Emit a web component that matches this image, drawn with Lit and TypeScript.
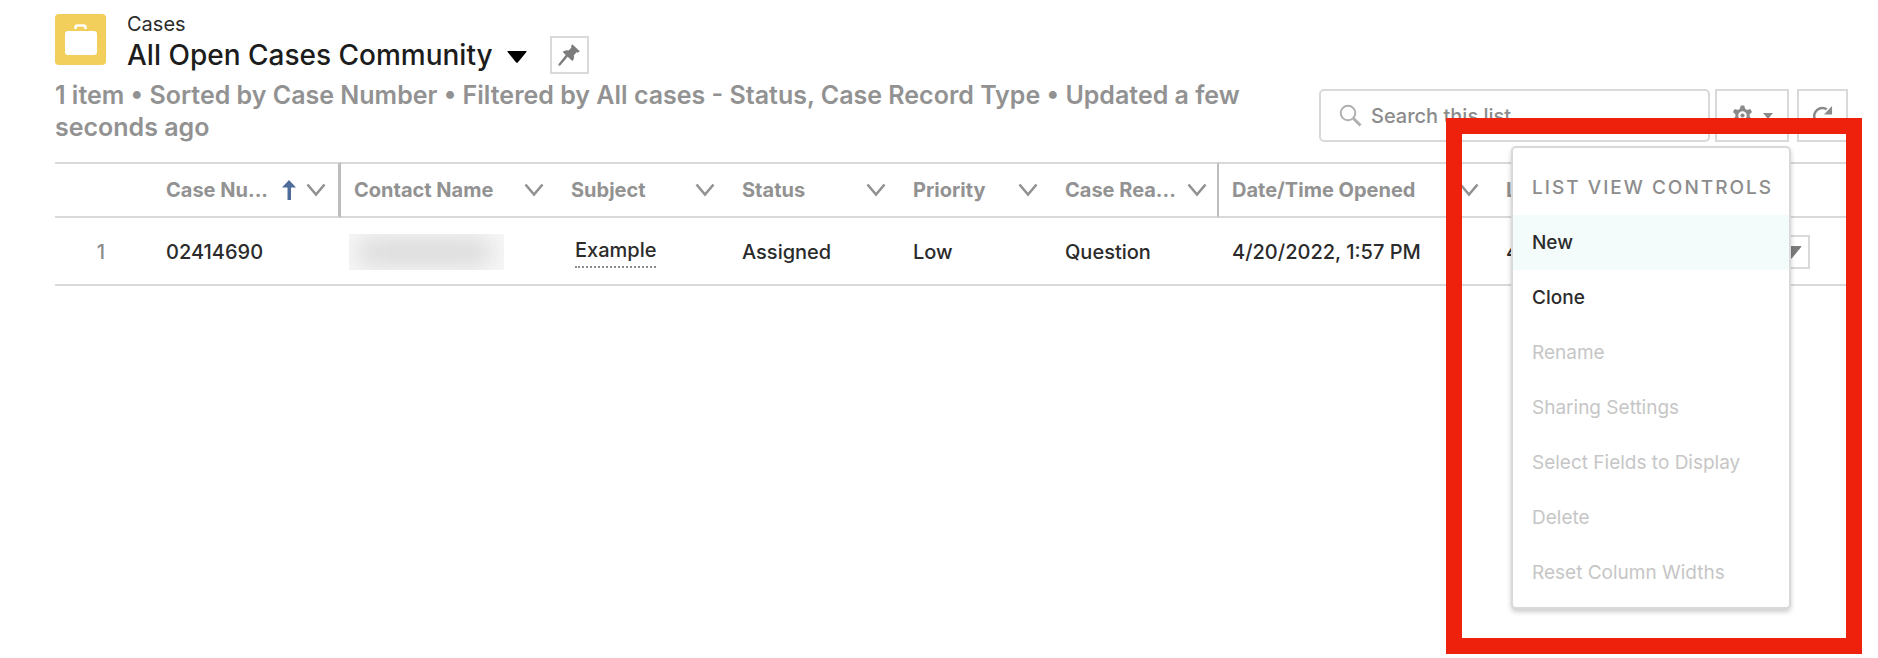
import { LitElement, html, css, svg } from "lit";
import { customElement, property } from "lit/decorators.js";
import { classMap } from "lit/directives/class-map.js";

const chevron = html`<svg class="chevron" viewBox="0 0 20 14" aria-hidden="true">
  <path d="M1.5 1.5L10 11.5L18.5 1.5" fill="none" stroke="currentColor" stroke-width="2.6" />
</svg>`;

const triangle = html`<svg class="triangle" viewBox="0 0 20 12" aria-hidden="true">
  <path d="M1 0h18q1 0 .4.9L10.800 11.400q-.8.8-1.600 0L.6.9Q0 0 1 0z" fill="currentColor" />
</svg>`;

@customElement("list-view-menu")
class ListViewMenu extends LitElement {
  static styles = css`
    :host {
      display: block;
      box-sizing: border-box;
      width: 280px;
      padding: 13px 0 7px;
      background: #fff;
      border: 2px solid #d9d9d9;
      border-radius: 5px;
      box-shadow: 0 3px 5px rgba(0, 0, 0, 0.2);
    }
    .heading {
      margin: 0;
      padding: 0 19px;
      font-size: 19px;
      line-height: 54px;
      font-weight: 500;
      letter-spacing: 2px;
      white-space: nowrap;
      color: #8c8c8c;
    }
    .items {
      margin: 0;
      padding: 0;
      list-style: none;
    }
    .item {
      display: block;
      width: 100%;
      height: 55px;
      padding: 0 19px;
      border: 0;
      background: none;
      font: inherit;
      font-size: 19px;
      font-weight: 500;
      text-align: left;
      color: #2b2b2b;
    }
    .item.active {
      background: #f3fcfa;
    }
    .item:disabled {
      font-weight: 400;
      color: #c6c6c6;
    }
  `;

  items = [
    { label: "New", enabled: true },
    { label: "Clone", enabled: true },
    { label: "Rename", enabled: false },
    { label: "Sharing Settings", enabled: false },
    { label: "Select Fields to Display", enabled: false },
    { label: "Delete", enabled: false },
    { label: "Reset Column Widths", enabled: false },
  ];

  render() {
    return html`
      <h2 class="heading">LIST VIEW CONTROLS</h2>
      <ul class="items">
        ${this.items.map(
          (item, i) => html`<li>
            <button class=${classMap({ item: true, active: i === 0 })} ?disabled=${!item.enabled}>${item.label}</button>
          </li>`
        )}
      </ul>
    `;
  }
}

@customElement("app-root")
class AppRoot extends LitElement {
  static styles = css`
    :host {
      display: block;
      position: relative;
      min-height: 100vh;
      box-sizing: border-box;
      padding: 12px 30px 0 55px;
      background: #fff;
      font-family: Inter, "Open Sans", sans-serif;
      color: #2b2b2b;
    }
    svg {
      display: block;
      flex: none;
    }
    button {
      font: inherit;
      cursor: pointer;
    }
    .header {
      display: flex;
      align-items: flex-end;
      gap: 50px;
    }
    .summary {
      flex: 1;
      min-width: 0;
    }
    .heading {
      display: flex;
      gap: 21px;
      margin-bottom: 5px;
    }
    .case-icon {
      width: 51px;
      height: 51px;
      margin-top: 2px;
    }
    .object {
      margin: 0;
      font-size: 20px;
      line-height: 24px;
    }
    .title-row {
      display: flex;
      align-items: center;
      height: 38px;
    }
    .title {
      margin: 0;
      font-size: 28px;
      line-height: 38px;
      font-weight: 500;
      color: #1c1c1c;
    }
    .picker {
      margin: 4px 23px 0 14px;
      padding: 0;
      border: 0;
      background: none;
      color: #000;
    }
    .picker .triangle {
      width: 20px;
      height: 12px;
    }
    .square {
      display: flex;
      align-items: center;
      justify-content: center;
      box-sizing: border-box;
      width: 39px;
      height: 38px;
      padding: 0;
      border: 2px solid #d9d9d9;
      background: #fff;
      color: #7c7c7c;
    }
    .pin {
      width: 24px;
      height: 24px;
    }
    .status {
      margin: 0;
      font-size: 25px;
      line-height: 32px;
      font-weight: 600;
      color: #929292;
    }
    .tools {
      display: flex;
      align-items: stretch;
      height: 53px;
      margin-bottom: 1px;
    }
    .search {
      display: flex;
      align-items: center;
      gap: 9px;
      box-sizing: border-box;
      width: 391px;
      padding: 0 18px;
      border: 2px solid #d9d9d9;
      border-radius: 5px;
    }
    .magnifier {
      width: 23px;
      height: 23px;
    }
    .field {
      flex: 1;
      min-width: 0;
      padding: 0;
      border: 0;
      outline: 0;
      background: none;
      font: inherit;
      font-size: 20px;
      font-weight: 500;
      color: #2b2b2b;
    }
    .field::placeholder {
      color: #8c8c8c;
      opacity: 1;
    }
    .tool {
      display: flex;
      align-items: center;
      justify-content: center;
      box-sizing: border-box;
      width: 51px;
      padding: 0;
      border: 2px solid #d9d9d9;
      background: #fff;
      color: #8a8a8a;
    }
    .tool.settings {
      width: 74px;
      gap: 10px;
      margin: 0 8px 0 5px;
    }
    .gear,
    .refresh {
      width: 21px;
      height: 21px;
    }
    .caret {
      width: 10px;
      height: 6px;
    }
    .grid {
      width: 100%;
      margin-top: 19px;
      table-layout: fixed;
      border-collapse: separate;
      border-spacing: 0;
      font-size: 20px;
      line-height: 28px;
    }
    .head {
      box-sizing: border-box;
      height: 56px;
      padding: 0 14px 0 13px;
      border-top: 2px solid #d9d9d9;
      border-bottom: 2px solid #d9d9d9;
      text-align: left;
      font-weight: 700;
      color: #929292;
    }
    .head.pinned {
      padding-right: 12px;
      border-right: 3px solid #bdbdbd;
    }
    .head.tight {
      padding-right: 10px;
      border-right: 2px solid #bdbdbd;
    }
    .label {
      display: flex;
      align-items: center;
    }
    .label .name {
      flex: 1;
      white-space: nowrap;
    }
    .chevron {
      width: 20px;
      height: 14px;
    }
    .sorted {
      width: 16px;
      height: 20px;
      margin-right: 9px;
    }
    .cell {
      box-sizing: border-box;
      height: 68px;
      padding: 2px 0 0 13px;
      border-bottom: 2px solid #d9d9d9;
      white-space: nowrap;
      font-weight: 500;
    }
    .cell.index {
      padding-right: 48px;
      text-align: right;
      color: #8c8c8c;
    }
    .c-index { width: 98px; }
    .c-number { width: 188px; }
    .c-contact { width: 217px; }
    .c-subject { width: 171px; }
    .c-status { width: 171px; }
    .c-priority { width: 152px; }
    .c-reason { width: 167px; }
    .c-opened { width: 274px; }
    .redacted {
      width: 155px;
      height: 36px;
      margin-left: -5px;
      overflow: hidden;
      background: #f7f7f7;
    }
    .smudge {
      height: 24px;
      margin: 6px 14px 6px 10px;
      background: #d6d6d6;
      filter: blur(12px);
    }
    .subject {
      display: inline-block;
      margin: 0 0 2px 4px;
      border-bottom: 2px dotted #8c8c8c;
      line-height: 32px;
      color: inherit;
      text-decoration: none;
    }
    .last {
      display: flex;
      align-items: center;
      justify-content: space-between;
      padding-right: 38px;
    }
    .square.row-menu {
      height: 34px;
    }
    .row-menu .triangle {
      width: 22px;
      height: 13px;
    }
    .menu {
      position: absolute;
      top: 146px;
      right: 87px;
    }
    .highlight {
      position: absolute;
      top: 118px;
      right: 16px;
      box-sizing: border-box;
      width: 416px;
      height: 536px;
      border: 16px solid #ee220c;
      pointer-events: none;
    }
  `;

  @property({ type: String }) listName = "All Open Cases Community";

  columns = [
    { key: "number", name: "Case Nu...", sorted: true, pinned: true },
    { key: "contact", name: "Contact Name" },
    { key: "subject", name: "Subject" },
    { key: "status", name: "Status" },
    { key: "priority", name: "Priority" },
    { key: "reason", name: "Case Rea...", tight: true },
    { key: "opened", name: "Date/Time Opened" },
    { key: "last", name: "L" },
  ] as { key: string; name: string; sorted?: boolean; pinned?: boolean; tight?: boolean }[];

  teeth = [0, 60, 120, 180, 240, 300];

  renderHead(col: { key: string; name: string; sorted?: boolean; pinned?: boolean; tight?: boolean }) {
    return html`<th scope="col" class=${classMap({ head: true, pinned: !!col.pinned, tight: !!col.tight })}>
      <div class="label">
        <span class="name">${col.name}</span>
        ${col.sorted
          ? html`<svg class="sorted" viewBox="0 0 16 20" aria-label="Sorted ascending">
              <path d="M8 0L15 7.500H10V20H6.500V7.500H1z" fill="#4f6b9a" />
            </svg>`
          : null}
        ${col.key === "last" ? null : chevron}
      </div>
    </th>`;
  }

  render() {
    return html`
      <header class="header">
        <div class="summary">
          <div class="heading">
            <svg class="case-icon" viewBox="0 0 51 51" aria-hidden="true">
              <rect width="51" height="51" rx="4" fill="#f2cf5b" />
              <path d="M20.500 15v-1.500q0-2 2-2h6q2 0 2 2V15" fill="none" stroke="#fff" stroke-width="2.600" />
              <rect x="10" y="17" width="32" height="24" rx="3" fill="#fff" />
            </svg>
            <div>
              <p class="object">Cases</p>
              <div class="title-row">
                <h1 class="title">${this.listName}</h1>
                <button class="picker" aria-label="Select a list view">${triangle}</button>
                <button class="square" aria-label="Pin this list view">
                  <svg class="pin" viewBox="0 0 24 24" aria-hidden="true">
                    <path
                      d="M15.200 1.200L22.800 8.200L20.600 9.700L19.500 9.300L16.800 12.500Q17.800 15.700 15.300 18L10.700 13.800L3.200 22.600L1.400 22.800L1.600 21L8.700 12L5.600 8.800Q8.300 6.700 11.600 7.500L14.500 4.500L14 3.200z"
                      fill="currentColor"
                    />
                  </svg>
                </button>
              </div>
            </div>
          </div>
          <p class="status">
            1 item • Sorted by Case Number • Filtered by All cases - Status, Case Record Type • Updated a few seconds ago
          </p>
        </div>
        <div class="tools">
          <label class="search">
            <svg class="magnifier" viewBox="0 0 23 23" aria-hidden="true">
              <circle cx="9" cy="9" r="7.300" fill="none" stroke="#b0b0b0" stroke-width="2" />
              <path d="M14.500 14.500L21.500 21.500" stroke="#b0b0b0" stroke-width="3" />
            </svg>
            <input class="field" type="search" aria-label="Search this list" placeholder="Search this list..." />
          </label>
          <button class="tool settings" aria-label="List view controls">
            <svg class="gear" viewBox="0 0 22 22" aria-hidden="true">
              ${this.teeth.map(
                (a) => svg`<path d="M8 5L9.200 .5h3.600L14 5z" fill="currentColor" transform="rotate(${a} 11 11)" />`
              )}
              <circle cx="11" cy="11" r="6" fill="none" stroke="currentColor" stroke-width="3" />
              <circle cx="11" cy="11" r="2.200" fill="currentColor" />
            </svg>
            <svg class="caret" viewBox="0 0 10 6" aria-hidden="true"><path d="M0 0H10L5 6z" fill="currentColor" /></svg>
          </button>
          <button class="tool" aria-label="Refresh">
            <svg class="refresh" viewBox="0 0 22 22" aria-hidden="true">
              <path d="M15.500 4.500A8.500 8.500 0 1 0 19 14" fill="none" stroke="currentColor" stroke-width="2.600" />
              <path d="M21 1V10H12.500z" fill="currentColor" />
            </svg>
          </button>
        </div>
      </header>

      <table class="grid">
        <colgroup>
          <col class="c-index" />
          <col class="c-number" />
          <col class="c-contact" />
          <col class="c-subject" />
          <col class="c-status" />
          <col class="c-priority" />
          <col class="c-reason" />
          <col class="c-opened" />
          <col />
        </colgroup>
        <thead>
          <tr>
            <th class="head" aria-label="Item number"></th>
            ${this.columns.map((c) => this.renderHead(c))}
          </tr>
        </thead>
        <tbody>
          <tr>
            <td class="cell index">1</td>
            <td class="cell">02414690</td>
            <td class="cell">
              <div class="redacted"><div class="smudge"></div></div>
            </td>
            <td class="cell"><a class="subject" href="#example">Example</a></td>
            <td class="cell">Assigned</td>
            <td class="cell">Low</td>
            <td class="cell">Question</td>
            <td class="cell">4/20/2022, 1:57 PM</td>
            <td class="cell">
              <div class="last">
                <span>4</span>
                <button class="square row-menu" aria-label="Show actions">${triangle}</button>
              </div>
            </td>
          </tr>
        </tbody>
      </table>

      <list-view-menu class="menu"></list-view-menu>
      <div class="highlight"></div>
    `;
  }
}
